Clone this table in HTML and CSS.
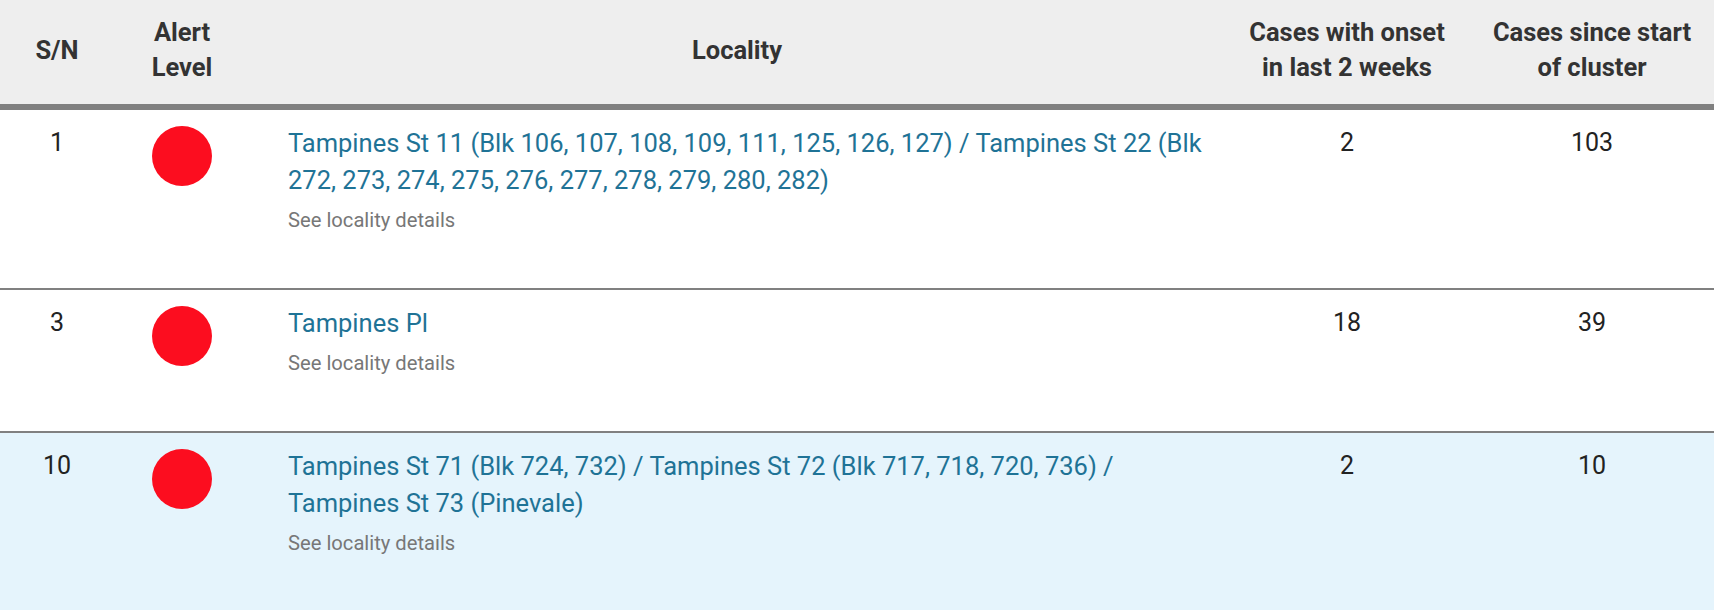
FILE: index.html
```html
<!DOCTYPE html>
<html>
<head>
<meta charset="utf-8">
<link rel="stylesheet" href="styles.css">
</head>
<body>
<table class="clusters">
  <colgroup>
    <col class="c-sn">
    <col class="c-alert">
    <col class="c-loc">
    <col class="c-onset">
    <col class="c-total">
  </colgroup>
  <thead>
    <tr>
      <th>S/N</th>
      <th>Alert<br>Level</th>
      <th>Locality</th>
      <th>Cases with onset<br>in last 2 weeks</th>
      <th>Cases since start<br>of cluster</th>
    </tr>
  </thead>
  <tbody>
    <tr>
      <td class="num">1</td>
      <td class="alert"><span class="dot"></span></td>
      <td class="loc">
        <a class="loc-link" href="#">Tampines St 11 (Blk 106, 107, 108, 109, 111, 125, 126, 127) / Tampines St 22 (Blk 272, 273, 274, 275, 276, 277, 278, 279, 280, 282)</a>
        <div class="details">See locality details</div>
      </td>
      <td class="num">2</td>
      <td class="num">103</td>
    </tr>
    <tr>
      <td class="num">3</td>
      <td class="alert"><span class="dot"></span></td>
      <td class="loc">
        <a class="loc-link" href="#">Tampines Pl</a>
        <div class="details">See locality details</div>
      </td>
      <td class="num">18</td>
      <td class="num">39</td>
    </tr>
    <tr class="highlight">
      <td class="num">10</td>
      <td class="alert"><span class="dot"></span></td>
      <td class="loc">
        <a class="loc-link" href="#">Tampines St 71 (Blk 724, 732) / Tampines St 72 (Blk 717, 718, 720, 736) / Tampines St 73 (Pinevale)</a>
        <div class="details">See locality details</div>
      </td>
      <td class="num">2</td>
      <td class="num">10</td>
    </tr>
  </tbody>
</table>
</body>
</html>
```

FILE: styles.css
```css
html, body {
  margin: 0;
  padding: 0;
  background: #ffffff;
}

body {
  font-family: Roboto, "Liberation Sans", Arial, sans-serif;
  color: #222222;
}

.clusters {
  width: 1714px;
  border-collapse: separate;
  border-spacing: 0;
  table-layout: fixed;
}

.c-sn { width: 114px; }
.c-alert { width: 136px; }
.c-loc { width: 974px; }
.c-onset { width: 246px; }
.c-total { width: 244px; }

.clusters thead th {
  background: #eeeeee;
  color: #333333;
  font-weight: 700;
  font-size: 25.5px;
  line-height: 35px;
  text-align: center;
  vertical-align: middle;
  padding: 15px 6px 19px;
  border-bottom: 6px solid #808080;
}

.clusters tbody td {
  vertical-align: top;
  font-size: 25px;
  line-height: 36px;
  padding: 15px 8px 0;
  border-bottom: 2px solid #808080;
}

.clusters tbody tr.highlight td {
  background: #e5f4fc;
  border-bottom: none;
}

.clusters td.num {
  text-align: center;
  color: #222222;
}

.clusters td.alert {
  text-align: center;
}

.dot {
  display: inline-block;
  width: 60px;
  height: 60px;
  margin-top: 1px;
  border-radius: 50%;
  background: #fc0d1f;
  vertical-align: top;
}

.clusters td.loc {
  padding-left: 38px;
  padding-right: 10px;
  padding-bottom: 54px;
}

.loc-link {
  color: #1f7396;
  font-size: 25.5px;
  text-decoration: none;
}

.details {
  margin-top: 7px;
  font-size: 20.2px;
  line-height: 28px;
  color: #777777;
}
```
